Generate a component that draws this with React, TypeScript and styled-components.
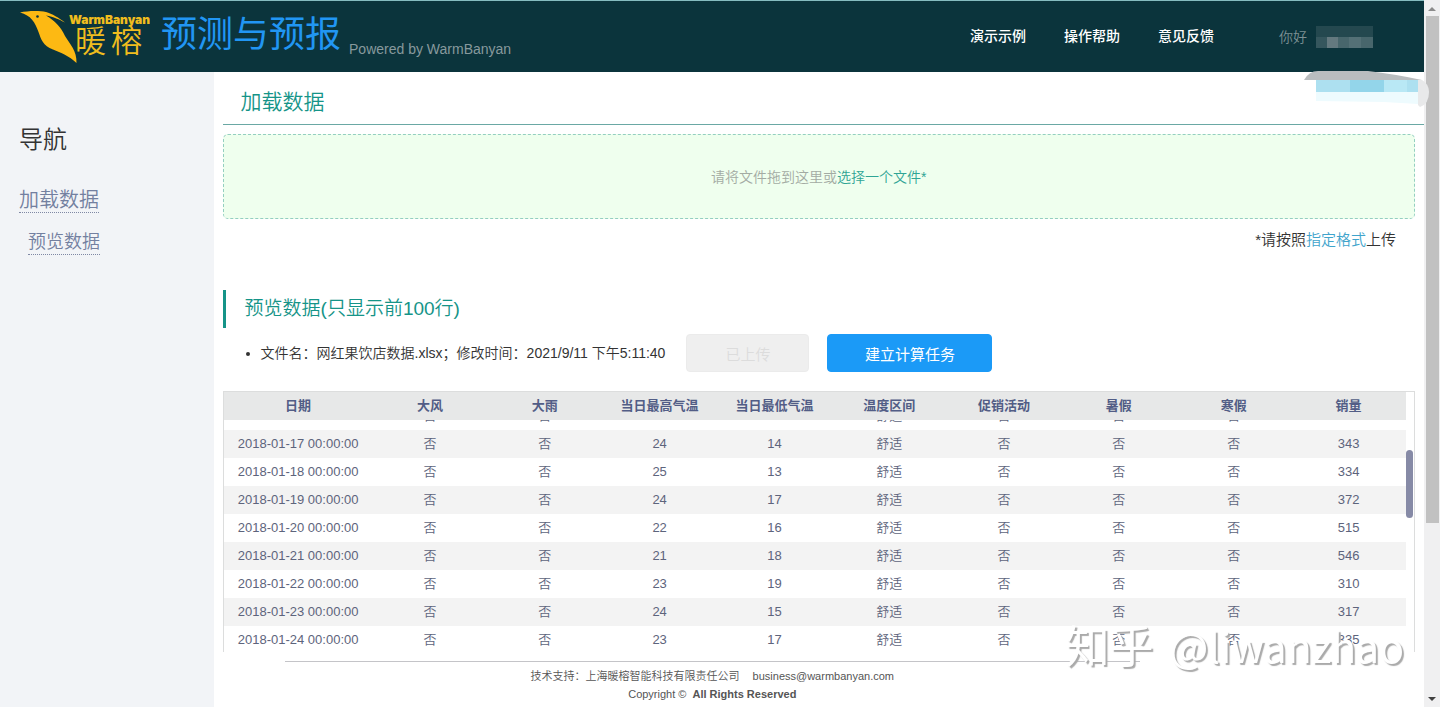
import React, { useLayoutEffect, useRef } from 'react';
import styled, { createGlobalStyle } from 'styled-components';

const GlobalStyle = createGlobalStyle`
  *, *::before, *::after { box-sizing: border-box; }
  body {
    margin: 0;
    background: #fff;
    color: #333;
    font-family: 'Liberation Sans', 'Noto Sans CJK SC', sans-serif;
    font-size: 14px;
  }
  h1, h2, h3, p, ul { margin: 0; padding: 0; font-weight: 350; }
  a { text-decoration: none; color: inherit; }
`;

const Shell = styled.div`
  display: flex;
  height: 100vh;
  overflow: hidden;
`;

const Page = styled.div`
  flex: 1;
  min-width: 0;
  display: flex;
  flex-direction: column;
`;

const Header = styled.header`
  position: relative;
  display: flex;
  align-items: center;
  flex: none;
  height: 72px;
  padding: 0 51px 0 20px;
  border-top: 1px solid #86bcc0;
  background: #0b343c;
`;

const Brand = styled.a`
  display: flex;
  width: 141px;
  height: 56px;
`;

const AppTitle = styled.h1`
  color: #2196f3;
  font-size: 36px;
  font-weight: 400;
  line-height: 68px;
  height: 71px;
`;

const Powered = styled.span`
  margin: 24px auto 0 8px;
  color: #87999d;
  line-height: 20px;
  white-space: nowrap;
`;

const TopNav = styled.nav`
  display: flex;
  gap: 38px;
  margin-right: 65px;
  padding-bottom: 2px;
  color: #fff;
  font-weight: 500;
  line-height: 20px;
  white-space: nowrap;
`;

const User = styled.div`
  display: flex;
  align-items: center;
  gap: 9px;
  color: #7d9094;
  font-weight: 350;
  line-height: 20px;
`;

const Smudge = styled.svg`
  position: absolute;
  top: 70px;
  right: -5px;
  z-index: 2;
`;

const Body = styled.div`
  flex: 1;
  min-height: 0;
  display: flex;
`;

const Sidebar = styled.aside`
  flex: none;
  width: 15%;
  padding: 50px 19px;
  background: #f2f4f7;
`;

const SideTitle = styled.h2`
  font-size: 24px;
  line-height: 36px;
  margin-bottom: 30px;
`;

const SideLink = styled.a<{ $sub?: boolean }>`
  display: table;
  margin: 0 0 17px ${p => (p.$sub ? 9 : 0)}px;
  border-bottom: 1px dotted #7f88a4;
  color: #7380a0;
  font-size: ${p => (p.$sub ? 18 : 20)}px;
  font-weight: 350;
  line-height: 24px;
`;

const Main = styled.main`
  flex: 1;
  min-width: 0;
  display: flex;
  flex-direction: column;
  padding-left: 9px;
`;

const PageTitle = styled.h2`
  flex: none;
  padding: 12px 18px 4px;
  border-bottom: 1px solid #6aa8a4;
  color: #159488;
  font-size: 21px;
  line-height: 36px;
`;

const Content = styled.div`
  flex: 1;
  min-height: 0;
  display: flex;
  flex-direction: column;
  padding: 9px 9px 0 0;
`;

const DropZone = styled.label`
  display: flex;
  align-items: center;
  justify-content: center;
  flex: none;
  height: 85px;
  padding-bottom: 2px;
  border: 1px dashed #94cfc0;
  border-radius: 5px;
  background: #efffee;
  color: #a3aba3;
  font-weight: 350;
  cursor: pointer;
`;

const FileInput = styled.input`
  display: none;
`;

const Choose = styled.span`
  color: #2fa595;
`;

const Hint = styled.p`
  padding: 9px 19px 38px 0;
  font-size: 15px;
  line-height: 24px;
  text-align: right;
`;

const HintLink = styled.a`
  color: #3fa4cc;
`;

const SectionTitle = styled.h3`
  flex: none;
  padding-left: 19px;
  border-left: 3px solid #159488;
  color: #159488;
  font-size: 19px;
  line-height: 38px;
`;

const FileRow = styled.div`
  display: flex;
  align-items: center;
  flex: none;
  gap: 18px;
  padding: 6px 0 19px 38px;
`;

const FileList = styled.ul`
  padding-right: 3px;
  line-height: 20px;
  white-space: nowrap;
`;

const Button = styled.button<{ $primary?: boolean }>`
  width: ${p => (p.$primary ? 165 : 123)}px;
  height: 38px;
  border: 1px solid ${p => (p.$primary ? '#1b9af7' : '#ebebeb')};
  border-radius: 4px;
  background: ${p => (p.$primary ? '#1b9af7' : '#efefef')};
  color: ${p => (p.$primary ? '#fff' : '#dcdcdc')};
  font-family: inherit;
  font-size: 15px;
  font-weight: ${p => (p.$primary ? 400 : 350)};
`;

const TableFrame = styled.div`
  flex: 1;
  min-height: 0;
  display: flex;
  border: 1px solid #dcdddd;
  border-bottom: 0;
`;

const Scroller = styled.div`
  flex: 1;
  min-width: 0;
  overflow: auto;
  scrollbar-width: none;
`;

const Rail = styled.div`
  width: 8px;
  padding: 58px 1px 0 0;
`;

const RailThumb = styled.div`
  height: 68px;
  border-radius: 4px;
  background: #868aa6;
`;

const Table = styled.table`
  width: 100%;
  table-layout: fixed;
  border-collapse: collapse;
  color: #5d647c;
  font-size: 13px;
  text-align: center;
`;

const Th = styled.th<{ $wide?: boolean }>`
  position: sticky;
  top: 0;
  width: ${p => (p.$wide ? '149px' : 'auto')};
  height: 28px;
  padding: 0;
  background: #e7e8e8;
  color: #525d86;
  font-weight: 700;
  line-height: 20px;
`;

const Tr = styled.tr`
  &:nth-child(even) { background: #f3f3f3; }
`;

const Td = styled.td`
  height: 28px;
  padding: 0;
  line-height: 20px;
  font-weight: 350;
  white-space: nowrap;
`;

const Footer = styled.footer`
  flex: none;
  margin: 9px 284px 0 62px;
  padding: 5px 0 4px;
  border-top: 1px solid #c4c4c8;
  color: #555;
  font-size: 11px;
  line-height: 18px;
  text-align: center;
  white-space: nowrap;
`;

const Email = styled.a`
  margin-left: 13px;
`;

const Rights = styled.strong`
  margin-left: 3px;
  font-weight: 700;
`;

const PageScroll = styled.div`
  display: flex;
  flex-direction: column;
  justify-content: space-between;
  align-items: center;
  flex: none;
  width: 16px;
  background: #f0f0f1;
`;

const PageThumb = styled.div`
  flex: 0 0 calc(72vh - 2px);
  width: 13px;
  margin-bottom: auto;
  background: #c1c1c1;
`;

const Watermark = styled.div`
  position: fixed;
  right: 36px;
  bottom: 32px;
  display: flex;
  align-items: baseline;
  gap: 16px;
  color: #fff;
  font-family: 'Noto Sans CJK SC', sans-serif;
  font-size: 41px;
  line-height: 60px;
  text-shadow: 2px 2px 1px #aaa;
  white-space: nowrap;
  pointer-events: none;
`;

const Site = styled.span`
  font-size: 44px;
`;

const columns = ['日期', '大风', '大雨', '当日最高气温', '当日最低气温', '温度区间', '促销活动', '暑假', '寒假', '销量'];

const records: [string, number, number, number][] = [
  ['2018-01-16', 23, 13, 328],
  ['2018-01-17', 24, 14, 343],
  ['2018-01-18', 25, 13, 334],
  ['2018-01-19', 24, 17, 372],
  ['2018-01-20', 22, 16, 515],
  ['2018-01-21', 21, 18, 546],
  ['2018-01-22', 23, 19, 310],
  ['2018-01-23', 24, 15, 317],
  ['2018-01-24', 23, 17, 335],
];

const Logo = () => (
  <svg width="130" height="56" viewBox="20 8 130 56" role="img" aria-label="WarmBanyan 暖榕">
    <path
      d="M20 11.5 C28 9.5 40 9.5 46 11 C52 12.500 59 17 65 21.500 C59 18.500 54 16 46 14.500 C55 20 61 26 65 35 C70 43 77 50 76.500 62 C69 55 61 51.500 53 48.500 C43 45 41 38 38.500 31 C35 21 31 14.500 20 11.500Z"
      fill="#fdb913"
    />
    <circle cx="37.500" cy="15.500" r="1.300" fill="#0b343c" />
    <g fill="#f0bd1e">
      <text x="69" y="23" fontFamily="Inter, sans-serif" fontWeight="900" fontSize="12">WarmBanyan</text>
      <g fontFamily="'Noto Sans CJK SC', sans-serif" fontWeight="350" fontSize="31">
        <text x="75" y="51">暖</text>
        <text x="111" y="51">榕</text>
      </g>
    </g>
  </svg>
);

export default function App() {
  const scroller = useRef<HTMLDivElement>(null);

  // Open the preview a little way down, under the sticky header.
  useLayoutEffect(() => {
    if (scroller.current) scroller.current.scrollTop = 18;
  }, []);

  return (
    <>
      <GlobalStyle />
      <Shell>
        <Page>
          <Header>
            <Brand href="#"><Logo /></Brand>
            <AppTitle>预测与预报</AppTitle>
            <Powered>Powered by WarmBanyan</Powered>
            <TopNav>
              <a href="#demo">演示示例</a>
              <a href="#help">操作帮助</a>
              <a href="#feedback">意见反馈</a>
            </TopNav>
            <User>
              你好
              <svg width="57" height="22" aria-hidden="true">
                <path d="M0 0H57V11H0Z" fill="#24484f" />
                <path d="M0 11H57V22H0Z" fill="#48666c" />
                <path d="M0 11H11V22H0Z" fill="#35565d" />
                <path d="M11 11H22V22H11Z" fill="#64797f" />
                <path d="M33 11H45V22H33Z" fill="#547076" />
              </svg>
            </User>
            <Smudge width="125" height="38" viewBox="0 0 125 38" aria-hidden="true">
              <path d="M0 9 Q5 0 14 0 H64 Q90 3 118 9Z" fill="#b9bdbf" />
              <path d="M114 9 H118 Q125 13 125 21 Q125 33 116 36 L114 34Z" fill="#e8e9ea" />
              <path d="M12 9H114V21H12Z" fill="#ade0f0" />
              <path d="M46 9H80V21H46Z" fill="#93d5ea" />
              <path d="M80 9H103V21H80Z" fill="#b9e8f5" />
              <path d="M12 21H114V33L80 31L12 30Z" fill="#eefbfe" />
            </Smudge>
          </Header>
          <Body>
            <Sidebar>
              <SideTitle>导航</SideTitle>
              <nav>
                <SideLink href="#load">加载数据</SideLink>
                <SideLink href="#preview" $sub>预览数据</SideLink>
              </nav>
            </Sidebar>
            <Main>
              <PageTitle id="load">加载数据</PageTitle>
              <Content>
                <DropZone>
                  <FileInput type="file" />
                  请将文件拖到这里或<Choose>选择一个文件*</Choose>
                </DropZone>
                <Hint>*请按照<HintLink href="#format">指定格式</HintLink>上传</Hint>
                <SectionTitle id="preview">预览数据(只显示前100行)</SectionTitle>
                <FileRow>
                  <FileList>
                    <li>文件名：网红果饮店数据.xlsx；修改时间：2021/9/11 下午5:11:40</li>
                  </FileList>
                  <Button disabled>已上传</Button>
                  <Button $primary>建立计算任务</Button>
                </FileRow>
                <TableFrame>
                  <Scroller ref={scroller}>
                    <Table>
                      <thead>
                        <tr>
                          {columns.map((c, i) => <Th key={c} $wide={i === 0}>{c}</Th>)}
                        </tr>
                      </thead>
                      <tbody>
                        {records.map(([day, high, low, sales]) => (
                          <Tr key={day}>
                            <Td>{day} 00:00:00</Td>
                            <Td>否</Td>
                            <Td>否</Td>
                            <Td>{high}</Td>
                            <Td>{low}</Td>
                            <Td>舒适</Td>
                            <Td>否</Td>
                            <Td>否</Td>
                            <Td>否</Td>
                            <Td>{sales}</Td>
                          </Tr>
                        ))}
                      </tbody>
                    </Table>
                  </Scroller>
                  <Rail><RailThumb /></Rail>
                </TableFrame>
              </Content>
              <Footer>
                <p>
                  技术支持：上海暖榕智能科技有限责任公司
                  <Email href="mailto:business@warmbanyan.com">business@warmbanyan.com</Email>
                </p>
                <p>Copyright © <Rights>All Rights Reserved</Rights></p>
              </Footer>
            </Main>
          </Body>
        </Page>
        <PageScroll aria-hidden="true">
          <svg width="16" height="16"><path d="M4 11L8 7L12 11Z" fill="#8b8b8b" /></svg>
          <PageThumb />
          <svg width="16" height="16"><path d="M4 6L8 10L12 6Z" fill="#404040" /></svg>
        </PageScroll>
      </Shell>
      <Watermark><Site>知乎</Site><span>@liwanzhao</span></Watermark>
    </>
  );
}
